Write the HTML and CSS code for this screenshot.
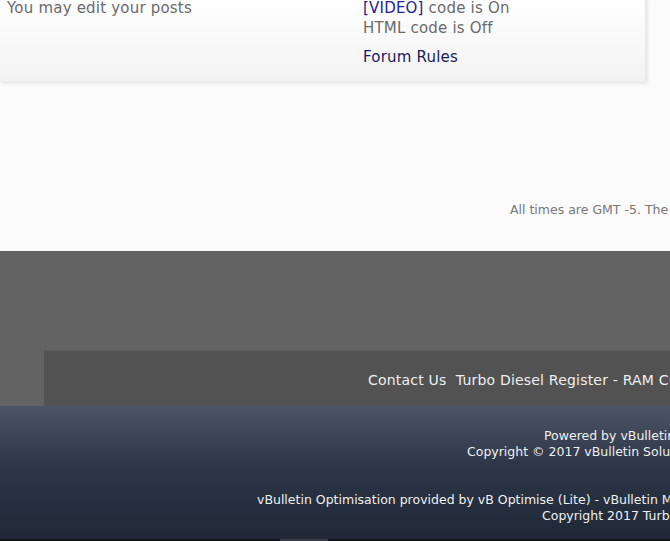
FILE: index.html
```html
<!DOCTYPE html>
<html>
<head>
<meta charset="utf-8">
<link rel="stylesheet" href="styles.css">
</head>
<body>
<div class="rules-box">
  <div class="col-left">
    <div class="line">You may edit your posts</div>
  </div>
  <div class="col-right">
    <div class="line"><a class="blue">[VIDEO]</a> code is On</div>
    <div class="line">HTML code is Off</div>
    <div class="line rules-link"><a class="navy">Forum Rules</a></div>
  </div>
</div>
<div class="times">All times are GMT -5. The time now is 05:12 AM.</div>
<div class="footer">
  <div class="footer-gray"></div>
  <div class="footer-links">Contact Us&nbsp;&nbsp;Turbo Diesel Register - RAM Cummins&nbsp;&nbsp;Archive&nbsp;&nbsp;Top</div>
</div>
<div class="copyright">
  <div class="cline l1">Powered by vBulletin® Version 4.2.3</div>
  <div class="cline l2">Copyright © 2017 vBulletin Solutions, Inc. All rights reserved.</div>
  <div class="cline l3 gap">vBulletin Optimisation provided by vB Optimise (Lite) - vBulletin Mods &amp; Addons</div>
  <div class="cline l4">Copyright 2017 Turbo Diesel Register</div>
</div>
<div class="bottom-strip"><span class="seg"></span></div>
</body>
</html>
```
FILE: styles.css
```css
html, body {
  margin: 0;
  padding: 0;
}
body {
  width: 670px;
  height: 541px;
  overflow: hidden;
  background: #fbfbfb;
  font-family: "DejaVu Sans", Verdana, sans-serif;
}
.rules-box {
  width: 646px;
  height: 84px;
  margin-top: -2px;
  box-sizing: border-box;
  padding-left: 7px;
  display: grid;
  grid-template-columns: 356px 1fr;
  background: linear-gradient(#ffffff, #f3f3f3);
  border-right: 1px solid #e6e6e6;
  border-bottom: 1px solid #ececec;
  box-shadow: 2px 2px 3px rgba(0,0,0,0.08);
  font-size: 15px;
  letter-spacing: 0.2px;
  color: #6a6a6a;
}
.line {
  line-height: 20px;
  white-space: nowrap;
}
.rules-link {
  margin-top: 9px;
}
.blue { color: #23238f; }
.navy { color: #1a1a5e; }
.times {
  margin-top: 118px;
  height: 20px;
  line-height: 20px;
  padding-left: 510px;
  font-size: 12.5px;
  color: #777;
  white-space: nowrap;
  margin-bottom: 31px;
}
.footer {
  background: #636363;
}
.footer-gray {
  height: 99px;
}
.footer-links {
  margin-left: 44px;
  height: 56px;
  box-sizing: border-box;
  padding-top: 3px;
  line-height: 52px;
  padding-left: 324px;
  background: #525252;
  border-top: 1px solid #5b5b5b;
  color: #efefef;
  font-size: 14px;
  letter-spacing: 0.2px;
  white-space: nowrap;
}
.copyright {
  height: 133px;
  box-sizing: border-box;
  padding-top: 22px;
  background: linear-gradient(#4b5567, #2c3646 45%, #1f2837);
  color: #f0f0f0;
  font-size: 12.5px;
  white-space: nowrap;
}
.cline { line-height: 16px; }
.l1 { padding-left: 544px; }
.l2 { padding-left: 467px; }
.l3 { padding-left: 257px; }
.l4 { padding-left: 542px; }
.gap { margin-top: 32px; }
.bottom-strip {
  height: 2px;
  background: #111318;
  display: flex;
  padding-left: 280px;
}
.seg {
  width: 48px;
  background: #3a3d44;
}
```
